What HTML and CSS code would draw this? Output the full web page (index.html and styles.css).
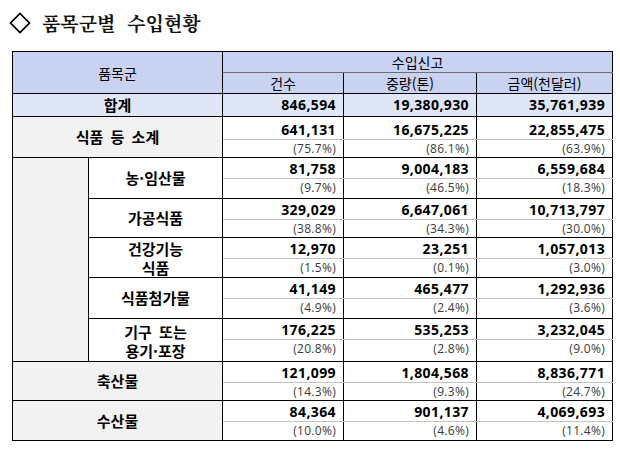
FILE: index.html
```html
<!DOCTYPE html>
<html lang="ko">
<head>
<meta charset="utf-8">
<title>품목군별 수입현황</title>
<link rel="stylesheet" href="styles.css">
</head>
<body>
<div class="page">
  <h1 class="title">
    <svg class="diamond" width="22" height="22" viewBox="0 0 22 22"><polygon points="11,1.5 20.5,11 11,20.5 1.5,11" fill="none" stroke="#000" stroke-width="1.7"/></svg>
    <span class="title-text">품목군별  수입현황</span>
  </h1>
  <table class="tbl">
    <colgroup>
      <col class="c-ind"><col class="c-lab"><col class="c-n1"><col class="c-n2"><col class="c-n3">
    </colgroup>
    <thead>
      <tr class="h1">
        <th colspan="2" rowspan="2" class="hd">품목군</th>
        <th colspan="3" class="hd top">수입신고</th>
      </tr>
      <tr class="h2">
        <th class="hd">건수</th><th class="hd">중량(톤)</th><th class="hd">금액(천달러)</th>
      </tr>
    </thead>
    <tbody>
      <tr class="total">
        <td colspan="2" class="lab">합계</td>
        <td class="tnum">846,594</td><td class="tnum">19,380,930</td><td class="tnum">35,761,939</td>
      </tr>

      <tr class="nr n23">
        <td colspan="2" rowspan="2" class="lab grey">식품 등 소계</td>
        <td class="num">641,131</td><td class="num">16,675,225</td><td class="num">22,855,475</td>
      </tr>
      <tr class="pr p18">
        <td class="pct">(75.7%)</td><td class="pct">(86.1%)</td><td class="pct">(63.9%)</td>
      </tr>

      <tr class="nr n21">
        <td rowspan="10" class="ind grey"></td>
        <td rowspan="2" class="lab">농·임산물</td>
        <td class="num">81,758</td><td class="num">9,004,183</td><td class="num">6,559,684</td>
      </tr>
      <tr class="pr p20">
        <td class="pct">(9.7%)</td><td class="pct">(46.5%)</td><td class="pct">(18.3%)</td>
      </tr>

      <tr class="nr n21">
        <td rowspan="2" class="lab">가공식품</td>
        <td class="num">329,029</td><td class="num">6,647,061</td><td class="num">10,713,797</td>
      </tr>
      <tr class="pr p18">
        <td class="pct">(38.8%)</td><td class="pct">(34.3%)</td><td class="pct">(30.0%)</td>
      </tr>

      <tr class="nr n21">
        <td rowspan="2" class="lab two">건강기능<br>식품</td>
        <td class="num">12,970</td><td class="num">23,251</td><td class="num">1,057,013</td>
      </tr>
      <tr class="pr p19">
        <td class="pct">(1.5%)</td><td class="pct">(0.1%)</td><td class="pct">(3.0%)</td>
      </tr>

      <tr class="nr n21">
        <td rowspan="2" class="lab">식품첨가물</td>
        <td class="num">41,149</td><td class="num">465,477</td><td class="num">1,292,936</td>
      </tr>
      <tr class="pr p20">
        <td class="pct">(4.9%)</td><td class="pct">(2.4%)</td><td class="pct">(3.6%)</td>
      </tr>

      <tr class="nr n21">
        <td rowspan="2" class="lab two wide">기구 또는<br>용기·포장</td>
        <td class="num">176,225</td><td class="num">535,253</td><td class="num">3,232,045</td>
      </tr>
      <tr class="pr p22">
        <td class="pct">(20.8%)</td><td class="pct">(2.8%)</td><td class="pct">(9.0%)</td>
      </tr>

      <tr class="nr n21">
        <td colspan="2" rowspan="2" class="lab grey">축산물</td>
        <td class="num">121,099</td><td class="num">1,804,568</td><td class="num">8,836,771</td>
      </tr>
      <tr class="pr p18">
        <td class="pct">(14.3%)</td><td class="pct">(9.3%)</td><td class="pct">(24.7%)</td>
      </tr>

      <tr class="nr n21">
        <td colspan="2" rowspan="2" class="lab grey">수산물</td>
        <td class="num">84,364</td><td class="num">901,137</td><td class="num">4,069,693</td>
      </tr>
      <tr class="pr p19">
        <td class="pct">(10.0%)</td><td class="pct">(4.6%)</td><td class="pct">(11.4%)</td>
      </tr>
    </tbody>
  </table>
</div>
</body>
</html>
```

FILE: styles.css
```css
html, body {
  margin: 0;
  background: #ffffff;
}

body {
  font-family: "Open Sans", "Noto Sans CJK KR", sans-serif;
  color: #000;
}

.page {
  padding: 10px 0 0 12px;
}

.title {
  display: flex;
  align-items: center;
  gap: 11px;
  height: 26px;
  margin: 0 0 15px -3px;
  font-family: "Noto Serif CJK KR", "Noto Sans CJK KR", serif;
  font-size: 19px;
  font-weight: 700;
  line-height: 26px;
  color: #111;
}

.diamond {
  display: block;
  flex: none;
}

.title-text {
  white-space: pre;
}

.tbl {
  border-collapse: collapse;
  table-layout: fixed;
  width: 600px;
}

.c-ind { width: 76px; }
.c-lab { width: 134px; }
.c-n1 { width: 121px; }
.c-n2 { width: 133px; }
.c-n3 { width: 136px; }

.tbl th,
.tbl td {
  border: 1px solid #000;
  padding: 0;
  box-sizing: border-box;
}

.tbl th {
  font-family: "Noto Sans CJK KR", sans-serif;
  font-weight: 400;
  font-size: 14px;
  line-height: 18px;
  text-align: center;
  vertical-align: middle;
}

.tbl .hd {
  background: #c9d3f1;
}

.tbl .h1 th,
.tbl .h2 th {
  height: 21px;
}

.tbl .h1 .top {
  border-bottom-color: #6f6f6f;
}

.tbl .h2 th {
  border-top-color: #6f6f6f;
}

.tbl .lab {
  font-family: "Noto Sans CJK KR", sans-serif;
  font-weight: 700;
  font-size: 15px;
  line-height: 20px;
  text-align: center;
  vertical-align: middle;
}

.tbl .grey {
  background: #f2f2f2;
}

.tbl .lab.two {
  line-height: 19px;
  padding-top: 1px;
}

.tbl .lab.wide,
.tbl .lab.grey {
  word-spacing: 3px;
}

.tbl .total td {
  background: #dfe6f7;
  height: 23px;
}

.tbl td.tnum,
.tbl td.num {
  font-weight: 700;
  font-size: 14px;
  letter-spacing: 0.4px;
  text-align: right;
  padding-right: 7px;
  line-height: 18px;
}

.tbl td.tnum {
  vertical-align: middle;
}

.tbl td.num {
  vertical-align: bottom;
  border-bottom-color: #c3c3c3;
}

.tbl td.pct {
  font-size: 12px;
  letter-spacing: 0.3px;
  color: #3a3a3a;
  text-align: right;
  padding-right: 7px;
  padding-top: 1px;
  vertical-align: top;
  line-height: 15px;
  border-top-color: #c3c3c3;
}

.tbl .n21 td.num { height: 21px; }
.tbl .n23 td.num { height: 23px; }
.tbl .p18 td.pct { height: 18px; }
.tbl .p19 td.pct { height: 19px; }
.tbl .p20 td.pct { height: 20px; }
.tbl .p22 td.pct { height: 22px; }
```
